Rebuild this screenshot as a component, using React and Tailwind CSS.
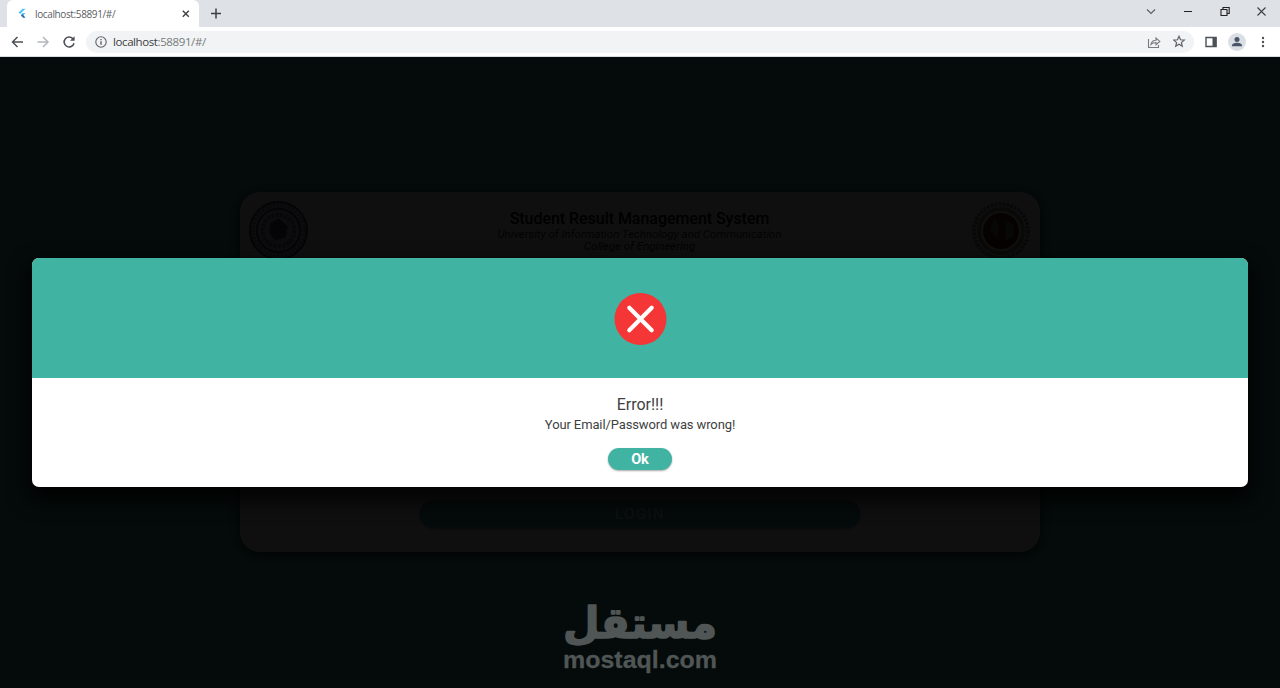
import React from "react";

export default function App() {
  return (
    <div className="flex h-[688px] w-[1280px] flex-col overflow-hidden bg-[#41b3a3] font-['Roboto',sans-serif]">
      <TabStrip />
      <Toolbar />
      <main className="relative flex flex-1 flex-col items-center">
        <LoginCard />
        <ErrorDialog />
        <Watermark />
      </main>
    </div>
  );
}

function TabStrip() {
  return (
    <div className="flex h-[27px] shrink-0 items-end bg-[#dee1e6] pl-[7px]">
      <div className="flex h-[27px] w-[192px] items-center rounded-t-[6px] bg-white pr-2 pl-[10px]">
        <FlutterLogo />
        <span className="ml-[6px] grow font-['Open_Sans',sans-serif] text-[10px] leading-none tracking-[-0.37px] text-[#5a5e62]">
          localhost:58891/#/
        </span>
        <svg className="size-[10px]" viewBox="0 0 10 10" fill="none" stroke="#3c4043" strokeWidth="1.4">
          <path d="M1.8 1.8l6 6M7.8 1.8l-6 6" />
        </svg>
      </div>
      <svg className="mb-[7px] ml-[11px] size-[12px]" viewBox="0 0 12 12" fill="none" stroke="#3c4043" strokeWidth="1.5">
        <path d="M6 0.5v10M1 5.5h10" />
      </svg>
      <div className="ml-auto flex h-full items-center gap-[25px] pr-3 pb-[3px]">
        <svg className="size-3" viewBox="0 0 12 12" fill="none" stroke="#5f6368" strokeWidth="1.2">
          <path d="M2 3.5l4 4 4-4" />
        </svg>
        <svg className="size-3" viewBox="0 0 12 12" fill="none" stroke="#202124">
          <path d="M2 5.5h8" />
        </svg>
        <svg className="size-3" viewBox="0 0 12 12" fill="none" stroke="#202124" strokeWidth="1.1">
          <path d="M2 3.5h6v6H2zM4 3.5v-2h6.2v6H8" />
        </svg>
        <svg className="size-3" viewBox="0 0 12 12" fill="none" stroke="#3c4043" strokeWidth="1.1">
          <path d="M1.5 1.5l8 8M9.5 1.5l-8 8" />
        </svg>
      </div>
    </div>
  );
}

function FlutterLogo() {
  return (
    <svg className="h-[11px] w-[12px]" viewBox="0 0 12 11">
      <path d="M5.5 0.8h3L3.1 6 1.5 4.5z" fill="#54c5f8" />
      <path d="M5.6 4.9h3L5.7 7.8 4 6.3z" fill="#54c5f8" />
      <path d="M3.9 7.5l1.5-1.4 3.2 3.7H6z" fill="#2a6da8" />
    </svg>
  );
}

function Toolbar() {
  return (
    <div className="flex h-[30px] shrink-0 items-center border-b border-[#dadce0] bg-white pr-[10px] pl-[10px]">
      <svg className="size-[14px]" viewBox="0 0 14 14" fill="none" stroke="#4d5156" strokeWidth="1.5">
        <path d="M13 7H2.7M7.5 2l-5 5 5 5" />
      </svg>
      <svg className="ml-3 size-[14px]" viewBox="0 0 14 14" fill="none" stroke="#b4b7ba" strokeWidth="1.5">
        <path d="M1.5 7h10.3M7 2l5 5-5 5" />
      </svg>
      <svg className="ml-3 size-[14px]" viewBox="0 0 14 14" fill="none" stroke="#4d5156" strokeWidth="1.6">
        <path d="M11.2 4A5 5 0 1 0 12 8.2" />
        <path d="M12.6 1.2v4.6H8z" fill="#4d5156" stroke="none" />
      </svg>
      <div className="ml-[10px] flex h-[22px] w-[1108px] items-center rounded-full bg-[#f1f3f4] pr-2 pl-[9px]">
        <svg className="size-3" viewBox="0 0 12 12" fill="none" stroke="#5f6368" strokeWidth="1.1">
          <circle cx="6" cy="6" r="5.2" />
          <path d="M6 5.2v3.6M6 3v1.2" strokeWidth="1.4" />
        </svg>
        <span className="ml-[6px] grow font-['Open_Sans',sans-serif] text-[11.5px] leading-none tracking-[-0.4px] text-[#777b80]">
          <span className="text-[#3c4043]">localhost</span>:58891/#/
        </span>
        <svg className="size-[14px]" viewBox="0 0 14 14" fill="none" stroke="#777b80" strokeWidth="1.1">
          <path d="M1.5 4v8.5h10V10" />
          <path d="M4 9.5c.4-3 2.2-4.2 5-4.3V3l3.8 3.4L9 9.7V7.5c-2.2 0-3.8.5-5 2z" />
        </svg>
        <svg className="ml-3 size-[13px]" viewBox="0 0 13 13" fill="none" stroke="#5f6368" strokeWidth="1.2">
          <path d="M6 1.3l1.5 3.5 3.8.3-2.9 2.5.9 3.7L6 9.3l-3.3 2 .9-3.7L.7 5.1l3.8-.3z" />
        </svg>
      </div>
      <svg className="ml-[11px] size-3" viewBox="0 0 12 12">
        <path d="M1 1.5h10v9H1z" fill="none" stroke="#4d5156" strokeWidth="1.4" />
        <path d="M7.5 1h4v10h-4z" fill="#4d5156" />
      </svg>
      <svg className="ml-[11px] size-[18px]" viewBox="0 0 18 18">
        <circle cx="9" cy="9" r="9" fill="#dadfe6" />
        <circle cx="9" cy="6.6" r="2.5" fill="#4a5568" />
        <path d="M4 13.2v-1c0-1.6 3-2.5 5-2.5s5 .9 5 2.5v1z" fill="#4a5568" />
      </svg>
      <svg className="ml-auto h-3 w-[14px]" viewBox="0 0 14 12" fill="#4d5156">
        <circle cx="7" cy="2" r="1.2" />
        <circle cx="7" cy="6" r="1.2" />
        <circle cx="7" cy="10" r="1.2" />
      </svg>
    </div>
  );
}

function LoginCard() {
  return (
    <section className="mt-[135px] flex h-[360px] w-[800px] flex-col rounded-[20px] bg-white px-2 pt-2 shadow-[0_2px_8px_2px_rgba(0,0,0,0.5)]">
      <header className="flex justify-between">
        <svg className="size-[61px]" viewBox="0 0 62 62" fill="none" stroke="#454d78">
          <circle cx="31" cy="31" r="29" fill="#c3c7d6" strokeWidth="2" />
          <circle cx="31" cy="31" r="26" strokeWidth="4" strokeDasharray="2 2" opacity="0.5" />
          <circle cx="31" cy="31" r="22" strokeWidth="2" />
          <circle cx="31" cy="31" r="16" strokeWidth="4" strokeDasharray="3 1.5" opacity="0.6" />
          <path d="M23 24l8-5 9 8-2 10-10 4-6-8z" fill="#454d78" />
        </svg>
        <div className="pt-[10px] text-center text-black">
          <h1 className="text-[16px] leading-[18px] font-medium tracking-[-0.04px]">
            Student Result Management System
          </h1>
          <p className="text-[11.5px] leading-[12px] tracking-[-0.02px] text-[#2b2b2b] italic">
            University of Information Technology and Communication
          </p>
          <p className="text-[11.5px] leading-[13px] text-[#2b2b2b] italic">College of Engineering</p>
        </div>
        <svg className="size-[62px]" viewBox="0 0 62 62" fill="none">
          <circle cx="31" cy="31" r="27" stroke="#8b8fae" strokeWidth="4" strokeDasharray="3 1" />
          <circle cx="31" cy="31" r="22" stroke="#9a9674" strokeWidth="4" />
          <circle cx="31" cy="31" r="18" fill="#6a2020" />
          <path d="M24 18l5 8-2 12-7-8zM35 20l9 5-1 12-7 3z" fill="#757d8a" />
        </svg>
      </header>
      <button className="mt-auto mb-6 h-[28px] w-[440px] self-center rounded-full bg-[#41b3a3] pt-px text-[15px] leading-none tracking-[1.4px] text-white shadow-[0_1px_3px_rgba(0,0,0,0.5)]">
        LOGIN
      </button>
    </section>
  );
}

function ErrorDialog() {
  return (
    <div className="absolute inset-0 flex items-start justify-center bg-black/94 px-8 pt-[201px]">
      <div className="flex h-[229px] w-full flex-col overflow-hidden rounded-[7px] bg-white shadow-[0_10px_20px_4px_rgba(0,0,0,0.8)]">
        <div className="flex h-[120px] shrink-0 items-center justify-center bg-[#41b3a3]">
          <svg className="size-[53px]" viewBox="0 0 53 53">
            <circle cx="26.5" cy="27" r="26" fill="#f43636" />
            <path d="M15.3 15.8l22.4 22.4M37.7 15.8L15.3 38.2" stroke="#fff" strokeWidth="4.2" strokeLinecap="round" />
          </svg>
        </div>
        <div className="flex flex-col items-center pt-[17px] text-[#3f3f3f]">
          <h2 className="text-[16px] leading-5">Error!!!</h2>
          <p className="text-[13px] leading-5 tracking-[-0.12px]">Your Email/Password was wrong!</p>
          <button className="mt-[13px] h-[22px] w-16 rounded-full bg-[#41b3a3] pt-[3px] text-[14.5px] leading-none font-bold text-white shadow-[0_1px_2px_rgba(0,0,0,0.35)]">
            Ok
          </button>
        </div>
      </div>
    </div>
  );
}

function Watermark() {
  return (
    <svg
      className="absolute top-[540px] left-[560px] h-[84px] w-[160px]"
      viewBox="0 0 160 84"
      fill="#505555"
      stroke="#505555"
      strokeLinejoin="round"
    >
      <text
        x="80"
        y="41"
        textAnchor="middle"
        strokeWidth="1.6"
        textLength="154"
        lengthAdjust="spacingAndGlyphs"
        className="font-['DejaVu_Sans',sans-serif] text-[43px] font-bold"
      >
        مستقل
      </text>
      <text
        x="3"
        y="71"
        strokeWidth="0.3"
        textLength="154"
        lengthAdjust="spacingAndGlyphs"
        className="font-['Liberation_Sans',sans-serif] text-[24px] font-bold"
      >
        mostaql.com
      </text>
    </svg>
  );
}
